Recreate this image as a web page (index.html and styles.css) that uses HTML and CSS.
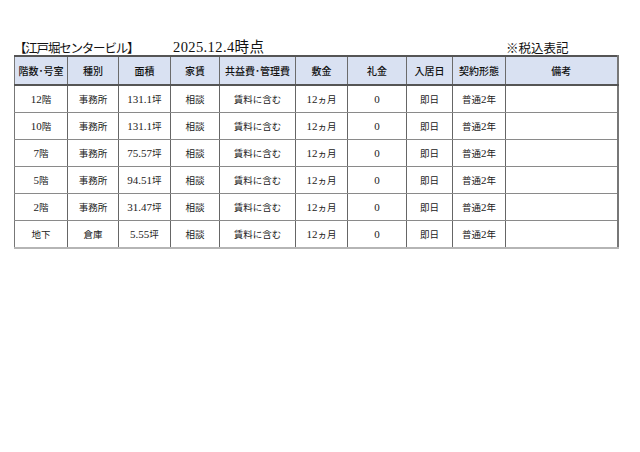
FILE: index.html
```html
<!DOCTYPE html>
<html lang="ja">
<head>
<meta charset="utf-8">
<link rel="stylesheet" href="styles.css">
</head>
<body>
<div class="page">
  <div class="titlebar">
    <span class="name">【江戸堀センタービル】</span>
    <span class="date">2025.12.4時点</span>
    <span class="tax">※税込表記</span>
  </div>
  <table class="sheet">
    <colgroup>
      <col style="width:53px"><col style="width:51px"><col style="width:52px"><col style="width:49px"><col style="width:76px"><col style="width:52px"><col style="width:59px"><col style="width:46px"><col style="width:53px"><col style="width:112px">
    </colgroup>
    <thead>
      <tr><th>階数･号室</th><th>種別</th><th>面積</th><th>家賃</th><th>共益費･管理費</th><th>敷金</th><th>礼金</th><th>入居日</th><th>契約形態</th><th>備考</th></tr>
    </thead>
    <tbody>
      <tr><td><span class="n">12</span>階</td><td>事務所</td><td><span class="n">131.1</span>坪</td><td>相談</td><td>賃料に含む</td><td><span class="n">12</span>ヵ月</td><td><span class="n">0</span></td><td>即日</td><td>普通<span class="n">2</span>年</td><td></td></tr>
      <tr><td><span class="n">10</span>階</td><td>事務所</td><td><span class="n">131.1</span>坪</td><td>相談</td><td>賃料に含む</td><td><span class="n">12</span>ヵ月</td><td><span class="n">0</span></td><td>即日</td><td>普通<span class="n">2</span>年</td><td></td></tr>
      <tr><td><span class="n">7</span>階</td><td>事務所</td><td><span class="n">75.57</span>坪</td><td>相談</td><td>賃料に含む</td><td><span class="n">12</span>ヵ月</td><td><span class="n">0</span></td><td>即日</td><td>普通<span class="n">2</span>年</td><td></td></tr>
      <tr><td><span class="n">5</span>階</td><td>事務所</td><td><span class="n">94.51</span>坪</td><td>相談</td><td>賃料に含む</td><td><span class="n">12</span>ヵ月</td><td><span class="n">0</span></td><td>即日</td><td>普通<span class="n">2</span>年</td><td></td></tr>
      <tr><td><span class="n">2</span>階</td><td>事務所</td><td><span class="n">31.47</span>坪</td><td>相談</td><td>賃料に含む</td><td><span class="n">12</span>ヵ月</td><td><span class="n">0</span></td><td>即日</td><td>普通<span class="n">2</span>年</td><td></td></tr>
      <tr><td>地下</td><td>倉庫</td><td><span class="n">5.55</span>坪</td><td>相談</td><td>賃料に含む</td><td><span class="n">12</span>ヵ月</td><td><span class="n">0</span></td><td>即日</td><td>普通<span class="n">2</span>年</td><td></td></tr>
    </tbody>
  </table>
</div>
</body>
</html>
```
FILE: styles.css
```css
html, body {
  margin: 0;
  padding: 0;
  background: #ffffff;
}
.page {
  padding: 40px 0 0 14px;
  font-family: "Liberation Serif", "Noto Sans CJK JP", serif;
  color: #111;
}
.titlebar {
  display: grid;
  grid-template-columns: 159px 333px auto;
  align-items: end;
  height: 15px;
  line-height: 15px;
}
.titlebar .name {
  font-family: "Noto Sans CJK JP", sans-serif;
  font-size: 12.5px;
  letter-spacing: -1.2px;
}
.titlebar .date {
  font-size: 14.5px;
  letter-spacing: 0.4px;
}
.titlebar .tax {
  font-family: "Noto Sans CJK JP", sans-serif;
  font-size: 12.5px;
}
.sheet {
  border-collapse: collapse;
  table-layout: fixed;
  width: 603px;
  margin-top: 0;
}
.sheet th {
  height: 27px;
  padding: 0;
  background: #d9e1f2;
  font-family: "Noto Sans CJK JP", sans-serif;
  font-weight: 500;
  font-size: 10px;
  color: #111;
  border: 1px solid #6b6b6b;
  border-top: 2px solid #555;
  border-bottom: 2px solid #555;
  text-align: center;
  vertical-align: middle;
}
.sheet td {
  height: 26px;
  padding: 0;
  font-size: 9.5px;
  text-align: center;
  vertical-align: middle;
  border-left: 1px solid #666;
  border-right: 1px solid #666;
  border-bottom: 1px solid #8a8a8a;
  color: #222;
}
.sheet .n {
  font-size: 11px;
}
.sheet tbody tr:last-child td {
  border-bottom: 2px solid #b5b5b5;
}
.sheet td:last-child, .sheet th:last-child {
  border-right: 2px solid #777;
}
.sheet td:first-child, .sheet th:first-child {
  border-left: 1px solid #777;
}
```
